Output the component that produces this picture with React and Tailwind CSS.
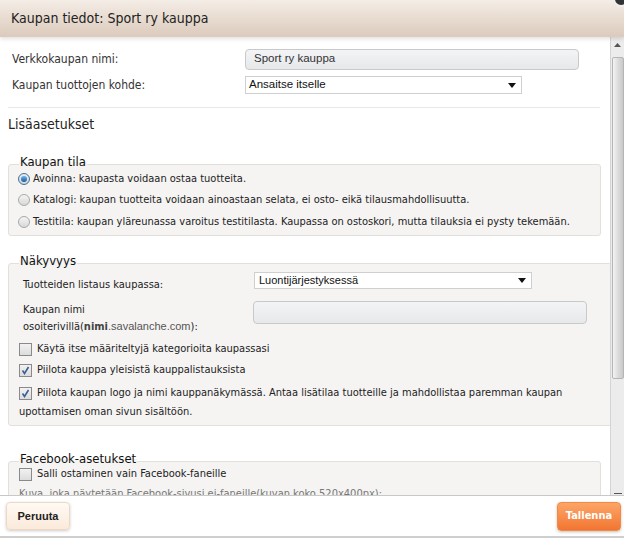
import React from "react";

const tahoma = { fontFamily: '"DejaVu Sans Condensed", "DejaVu Sans", sans-serif', fontStretch: "condensed" };
const arial = { fontFamily: '"Liberation Sans", Arial, sans-serif' };

function Radio({ checked, children }) {
  return (
    <div className="flex items-center h-[21.5px]">
      <span
        className={
          "w-[12px] h-[12px] rounded-full border flex items-center justify-center shrink-0 " +
          (checked
            ? "border-[#4a6f8f] bg-gradient-to-b from-[#e8eef4] to-[#c9d6e2]"
            : "border-[#a9a9a9] bg-gradient-to-b from-[#f4f4f4] to-[#d8d8d8]")
        }
      >
        {checked && <span className="w-[6px] h-[6px] rounded-full bg-gradient-to-b from-[#6fb2ea] to-[#1b5d9b]" />}
      </span>
      <span className="ml-[3px] text-[11px] text-[#222]">{children}</span>
    </div>
  );
}

function Check({ checked }) {
  return (
    <span className="w-[13px] h-[13px] border border-[#8a8a8a] bg-gradient-to-b from-[#f2f2f2] to-[#dcdcdc] flex items-center justify-center shrink-0">
      {checked && (
        <svg width="9" height="9" viewBox="0 0 9 9">
          <path d="M1.5 4.5 L3.5 7.5 L7.5 1" fill="none" stroke="#3b5f93" strokeWidth="1.6" />
        </svg>
      )}
    </span>
  );
}

function Fieldset({ legend, className, children }) {
  return (
    <div className={"relative border border-[#e3e0dc] rounded-[3px] bg-[#f5f4f2] " + className}>
      <div className="absolute left-[10px] top-[-10px] px-[1px] text-[13px] text-[#111] leading-none bg-gradient-to-b from-white from-50% to-[#f5f4f2] to-50%">
        {legend}
      </div>
      {children}
    </div>
  );
}

export default function App() {
  return (
    <div className="w-[624px] h-[538px] flex flex-col bg-white overflow-hidden relative" style={tahoma}>
      {/* header */}
      <div className="h-[37px] shrink-0 bg-gradient-to-b from-[#f4ede6] to-[#dccabc] flex items-center pl-[11px] text-[14px] text-[#222] shadow-[0_2px_4px_rgba(0,0,0,0.12)] z-10">
        Kaupan tiedot: Sport ry kauppa
      </div>
      <div className="absolute right-[-5px] top-[-9px] w-[16px] h-[16px] rounded-full bg-[#333] border-2 border-[#eee] z-20" />

      {/* body */}
      <div className="flex-1 flex min-h-0">
        <div className="flex-1 overflow-hidden pl-[8px] pr-[8px]">
          <div className="pr-[2px]">
            <div className="flex items-center h-[24px] mt-[10px] text-[12px] text-[#333]">
              <div className="pl-[4px] w-[237px]">Verkkokaupan nimi:</div>
              <div
                className="w-[334px] h-[21px] rounded-[4px] border border-[#c9c9c9] bg-gradient-to-b from-[#f3f4f5] to-[#e6e8ea] flex items-center pl-[8px] text-[11.5px] text-[#333]"
                style={arial}
              >
                Sport ry kauppa
              </div>
            </div>
            <div className="flex items-center h-[24px] mt-[2px] text-[12px] text-[#333]">
              <div className="pl-[4px] w-[237px]">Kaupan tuottojen kohde:</div>
              <div
                className="w-[277px] h-[18px] border border-[#cfcfcf] bg-white flex items-center pl-[3px] pr-[5px] text-[11.5px] text-[#111]"
                style={arial}
              >
                <span className="flex-1">Ansaitse itselle</span>
                <svg width="8" height="5" viewBox="0 0 8 5">
                  <path d="M0 0 H8 L4 5 Z" fill="#111" />
                </svg>
              </div>
            </div>
            <div className="h-px bg-[#ede8e3] mt-[10px]" />

            <div className="text-[14px] text-[#222] mt-[9px] leading-none">Lisäasetukset</div>

            <Fieldset legend="Kaupan tila" className="mt-[33px] w-[593px] pt-[3px] pb-[2px] pl-[9px]">
              <Radio checked>Avoinna: kaupasta voidaan ostaa tuotteita.</Radio>
              <Radio>Katalogi: kaupan tuotteita voidaan ainoastaan selata, ei osto- eikä tilausmahdollisuutta.</Radio>
              <Radio>Testitila: kaupan yläreunassa varoitus testitilasta. Kaupassa on ostoskori, mutta tilauksia ei pysty tekemään.</Radio>
            </Fieldset>

            <Fieldset legend="Näkyvyys" className="mt-[27px] w-[604px] pt-[8px] pb-[4px] pl-[10px] text-[11px] text-[#222]">
              <div className="flex items-start">
                <div className="w-[235px] pl-[4px] pt-[5px]">Tuotteiden listaus kaupassa:</div>
                <div
                  className="w-[278px] h-[17px] border border-[#cfcfcf] bg-white flex items-center pl-[4px] pr-[5px] text-[11px] text-[#111]"
                  style={arial}
                >
                  <span className="flex-1">Luontijärjestyksessä</span>
                  <svg width="8" height="5" viewBox="0 0 8 5">
                    <path d="M0 0 H8 L4 5 Z" fill="#111" />
                  </svg>
                </div>
              </div>
              <div className="flex items-start mt-[8px]">
                <div className="w-[234px] pl-[4px] leading-[17px] pt-[0px]">
                  Kaupan nimi
                  <br />
                  osoiterivillä(<b className="font-bold text-[#444]">nimi</b>
                  <span className="text-[#555]" style={arial}>.savalanche.com</span>):
                </div>
                <div className="w-[334px] h-[23px] rounded-[4px] border border-[#c9c9c9] bg-gradient-to-b from-[#f3f4f5] to-[#e6e8ea]" />
              </div>
              <div className="flex items-center h-[20px] mt-[4px]">
                <Check />
                <span className="ml-[5px]">Käytä itse määriteltyjä kategorioita kaupassasi</span>
              </div>
              <div className="flex items-center h-[20px] mt-[1px]">
                <Check checked />
                <span className="ml-[5px]">Piilota kauppa yleisistä kauppalistauksista</span>
              </div>
              <div className="mt-[3px] leading-[19px] pr-[20px]">
                <span className="inline-flex align-[-2px] mr-[5px]">
                  <Check checked />
                </span>
                Piilota kaupan logo ja nimi kauppanäkymässä. Antaa lisätilaa tuotteille ja mahdollistaa paremman kaupan upottamisen oman sivun sisältöön.
              </div>
            </Fieldset>

            <Fieldset legend="Facebook-asetukset" className="mt-[35px] w-[593px] pt-[3px] pl-[10px] text-[11px] text-[#222] h-[60px]">
              <div className="flex items-center h-[18px]">
                <Check />
                <span className="ml-[5px]">Salli ostaminen vain Facebook-faneille</span>
              </div>
              <div className="mt-[3px] text-[#777]">Kuva, joka näytetään Facebook-sivusi ei-faneille(kuvan koko 520x400px):</div>
            </Fieldset>
          </div>
        </div>

        {/* scrollbar */}
        <div className="w-[14px] shrink-0 bg-[#ececec] border-l border-[#d4d4d4] flex flex-col items-center">
          <div className="h-[16px] flex items-center justify-center">
            <svg width="7" height="4" viewBox="0 0 7 4">
              <path d="M0 4 L3.5 0 L7 4 Z" fill="#555" />
            </svg>
          </div>
          <div className="w-[12px] h-[322px] mt-[4px] rounded-[2px] border border-[#b5b5b5] bg-gradient-to-r from-[#f4f4f4] via-[#dcdcdc] to-[#c9c9c9]" />
          <div className="flex-1" />
          <div className="h-[8px] flex items-end pb-[1px]">
            <div className="w-[8px] h-[1px] bg-[#555]" />
          </div>
        </div>
      </div>

      {/* footer */}
      <div className="h-[43px] shrink-0 border-t border-[#c8c8c8] border-b-2 border-b-[#cfcfcf] flex items-center justify-between pl-[6px] pr-[3px] bg-white">
        <button
          className="w-[64px] h-[28px] rounded-[4px] border border-[#ecd9c5] bg-gradient-to-b from-[#fffaf4] to-[#fbeadb] shadow-[0_1px_3px_rgba(0,0,0,0.2)] text-[11px] font-bold text-[#222]"
          style={arial}
        >
          Peruuta
        </button>
        <button className="w-[64px] h-[29px] rounded-[4px] border border-[#f08a45] bg-gradient-to-b from-[#fca566] to-[#f27530] shadow-[0_1px_3px_rgba(0,0,0,0.25)] text-[11px] font-bold text-white">
          Tallenna
        </button>
      </div>
    </div>
  );
}
